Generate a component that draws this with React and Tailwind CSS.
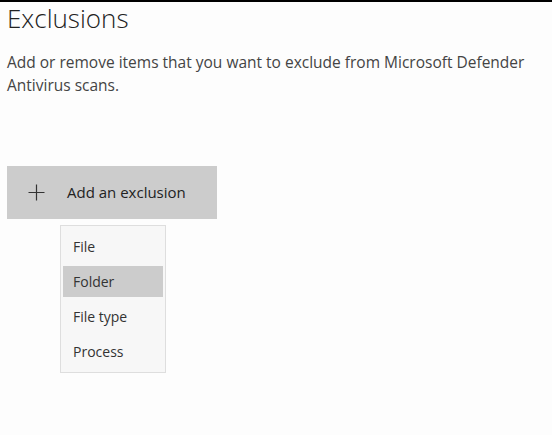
export default function App() {
  const items = ["File", "Folder", "File type", "Process"];
  return (
    <div className="w-[552px] h-[435px] bg-[#fdfdfd] border-t-2 border-black overflow-hidden" style={{ fontFamily: '"Open Sans", "Noto Sans", sans-serif' }}>
      <div className="pl-[7px]">
        <h1 className="text-[26px] leading-[32px] font-light text-[#222]">Exclusions</h1>
        <p className="mt-[17px] text-[15.5px] leading-[23px] text-[#444] w-[540px]">
          Add or remove items that you want to exclude from Microsoft Defender Antivirus scans.
        </p>
        <div className="mt-[69px] w-[210px] h-[53px] bg-[#cccccc] flex items-center">
          <svg width="17" height="17" viewBox="0 0 17 17" className="ml-[21px]">
            <path d="M8.5 0.5V16.5M0.5 8.5H16.5" stroke="#333" strokeWidth="1.2" />
          </svg>
          <span className="ml-[22px] text-[15px] text-[#222]">Add an exclusion</span>
        </div>
        <div className="ml-[53px] mt-[6px] w-[106px] h-[148px] bg-[#f7f7f7] border border-[#dedede] py-[3px] px-[2px] flex flex-col">
          {items.map((it) => (
            <div key={it} className={`my-[2px] h-[31px] flex items-center pl-[10px] text-[14px] text-[#333] ${it === "Folder" ? "bg-[#cccccc]" : ""}`}>
              {it}
            </div>
          ))}
        </div>
      </div>
    </div>
  );
}
